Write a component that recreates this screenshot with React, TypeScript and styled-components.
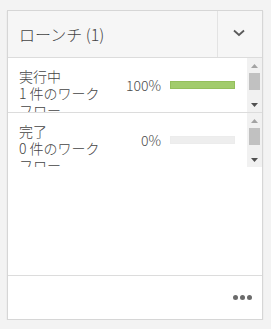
import React from "react";
import styled, { createGlobalStyle } from "styled-components";

const Global = createGlobalStyle`
  html, body { margin: 0; padding: 0; background: #f3f3f3; }
  body { font-family: "Noto Sans CJK JP", "Noto Sans", sans-serif; font-weight: 300; }
`;

const Page = styled.div`
  padding: 10px 8px 0 7px;
`;

const Card = styled.div`
  width: 254px;
  height: 308px;
  background: #fff;
  border: 1px solid #d6d6d6;
  box-shadow: 0 1px 1px rgba(0, 0, 0, 0.12);
  display: flex;
  flex-direction: column;
`;

const Header = styled.div`
  height: 46px;
  display: flex;
  background: #f6f6f6;
  border-bottom: 1px solid #dcdcdc;
`;

const Title = styled.div`
  flex: 1;
  display: flex;
  align-items: center;
  padding-left: 11px;
  font-size: 16px;
  color: #444;
  padding-bottom: 1px;
`;

const Toggle = styled.div`
  width: 45px;
  border-left: 1px solid #e3e3e3;
  display: flex;
  align-items: center;
  justify-content: center;
  padding: 0 2px 2px 0;
  box-sizing: border-box;
`;

const Body = styled.div`
  flex: 1;
`;

const Row = styled.div<{ $divider?: boolean }>`
  height: 54px;
  display: flex;
  border-bottom: ${(p) => (p.$divider ? "1px solid #dcdcdc" : "none")};
`;

const RowContent = styled.div`
  flex: 1;
  overflow: hidden;
  display: flex;
  align-items: flex-start;
  padding: 10px 0 0 11px;
  color: #444;
  font-size: 14px;
  line-height: 17px;
`;

const Label = styled.div`
  width: 86px;
  flex-shrink: 0;
`;

const Percent = styled.div`
  width: 56px;
  flex-shrink: 0;
  text-align: right;
  padding-top: 9px;
  color: #4d4d4d;
`;

const Bar = styled.div<{ $fill: boolean }>`
  width: 65px;
  height: 8px;
  flex-shrink: 0;
  margin: 13px 0 0 9px;
  box-sizing: border-box;
  background: ${(p) => (p.$fill ? "#a2cc6c" : "#eeeeee")};
  border: 1px solid ${(p) => (p.$fill ? "#94bf5c" : "#ececec")};
`;

const Scrollbar = styled.div`
  width: 15px;
  flex-shrink: 0;
  background: #f1f1f1;
  display: flex;
  flex-direction: column;
`;

const ScrollButton = styled.div`
  height: 15px;
  display: flex;
  align-items: center;
  justify-content: center;
`;

const Track = styled.div`
  flex: 1;
  padding: 0 2px;
`;

const Thumb = styled.div`
  height: 17px;
  background: #c1c1c1;
`;

const Footer = styled.div`
  height: 43px;
  border-top: 1px solid #dcdcdc;
  display: flex;
  align-items: center;
  justify-content: flex-end;
  padding-right: 10px;
  gap: 2px;
`;

const Dot = styled.span`
  width: 5px;
  height: 5px;
  border-radius: 50%;
  background: #6b6b6b;
`;

const rows = [
  { state: "実行中", count: "1 件のワークフロー", pct: 100 },
  { state: "完了", count: "0 件のワークフロー", pct: 0 },
];

function FakeScrollbar() {
  return (
    <Scrollbar>
      <ScrollButton>
        <svg width="7" height="4" viewBox="0 0 7 4">
          <path d="M0 4 L3.5 0 L7 4 Z" fill="#a3a3a3" />
        </svg>
      </ScrollButton>
      <Track>
        <Thumb />
      </Track>
      <ScrollButton>
        <svg width="7" height="4" viewBox="0 0 7 4">
          <path d="M0 0 L7 0 L3.5 4 Z" fill="#505050" />
        </svg>
      </ScrollButton>
    </Scrollbar>
  );
}

export default function App() {
  return (
    <>
      <Global />
      <Page>
        <Card>
          <Header>
            <Title>ローンチ (1)</Title>
            <Toggle>
              <svg width="12" height="8" viewBox="0 0 12 8">
                <path d="M1 1.5 L6 6 L11 1.5" fill="none" stroke="#5a5a5a" strokeWidth="1.8" />
              </svg>
            </Toggle>
          </Header>
          <Body>
            {rows.map((r, i) => (
              <Row key={r.state} $divider={i === 0}>
                <RowContent>
                  <Label>
                    {r.state}
                    <br />
                    {r.count}
                  </Label>
                  <Percent>{r.pct}%</Percent>
                  <Bar $fill={r.pct > 0} />
                </RowContent>
                <FakeScrollbar />
              </Row>
            ))}
          </Body>
          <Footer>
            <Dot />
            <Dot />
            <Dot />
          </Footer>
        </Card>
      </Page>
    </>
  );
}
